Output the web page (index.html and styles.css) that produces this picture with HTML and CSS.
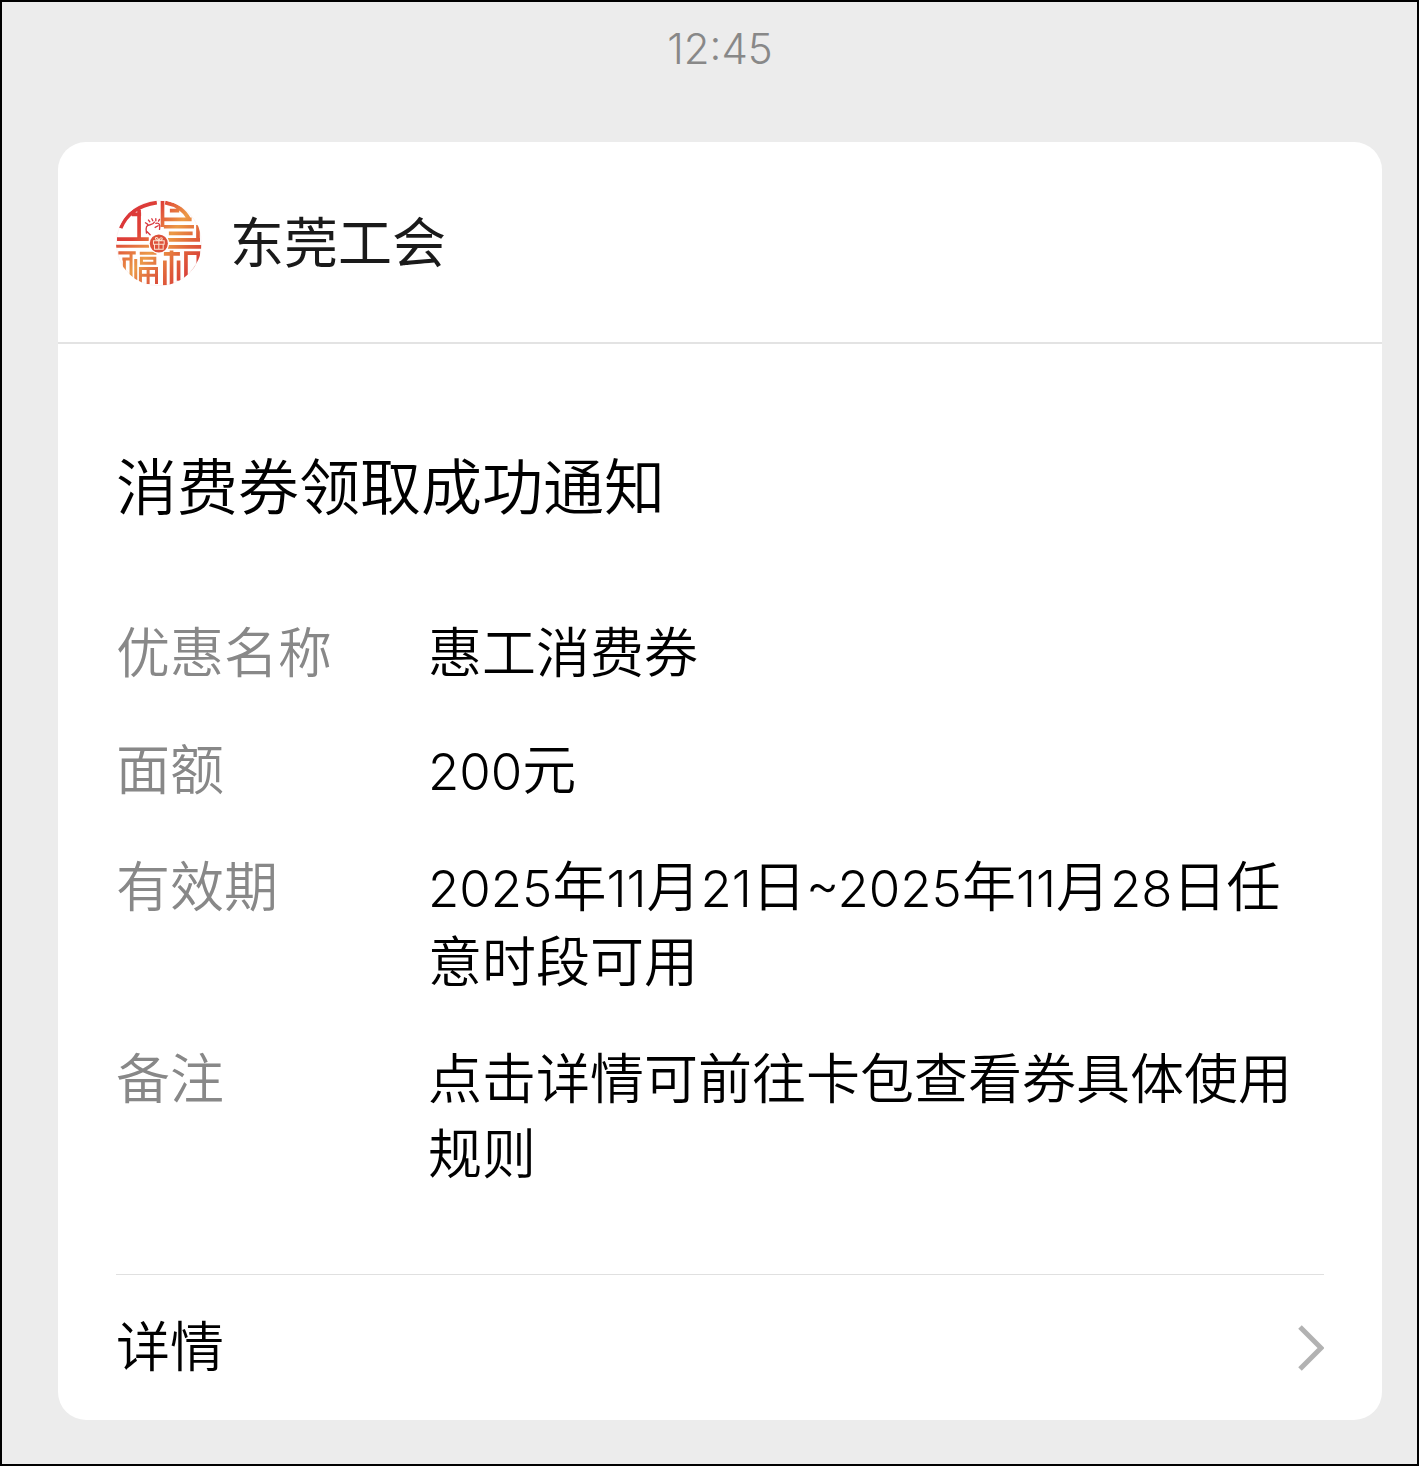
FILE: index.html
```html
<!DOCTYPE html>
<html lang="zh-CN">
<head>
<meta charset="utf-8">
<meta name="viewport" content="width=device-width, initial-scale=1">
<title>消费券领取成功通知</title>
<link rel="stylesheet" href="styles.css">
</head>
<body>
<main class="chat">
  <time class="time" datetime="12:45">12:45</time>
  <article class="card">
    <header class="card-header">
      <svg class="logo" viewBox="17 17 257 257" aria-hidden="true">
        <defs>
          <linearGradient id="tone" gradientUnits="userSpaceOnUse" x1="20" y1="40" x2="270" y2="240">
            <stop offset="0" stop-color="#d9303a"/>
            <stop offset=".3" stop-color="#df4238"/>
            <stop offset=".55" stop-color="#ec9a45"/>
            <stop offset=".75" stop-color="#e0603a"/>
            <stop offset="1" stop-color="#d52f39"/>
          </linearGradient>
          <linearGradient id="warm" gradientUnits="userSpaceOnUse" x1="20" y1="150" x2="150" y2="270">
            <stop offset="0" stop-color="#e0503a"/>
            <stop offset=".5" stop-color="#eb9a48"/>
            <stop offset="1" stop-color="#d94338"/>
          </linearGradient>
          <clipPath id="disc"><circle cx="145" cy="146" r="128"/></clipPath>
        </defs>
        <circle cx="145" cy="146" r="127" fill="none" stroke="#f4dcda" stroke-width="1"/>
        <g clip-path="url(#disc)" fill="none" stroke="url(#tone)" stroke-width="11">
          <path d="M31 101Q57 37 139 25M64 60H92M86 46V134M20 134H115"/>
          <path d="M156 20V98M164 25Q214 34 236 75M160 75H243M178 49H206M160 97H250M262 92V136M175 117H246M172 136H268"/>
          <path d="M172 157H272M160 178H208M183 168V272M163 198V272M204 198V258M226 260V176H263V210L234 250"/>
        </g>
        <g clip-path="url(#disc)" fill="none" stroke="url(#warm)" stroke-width="9">
          <path d="M17 155H116M24 175H76M36 193H58M62 175V250M42 193V240M76 193V256M88 176H138M93 191H133V206H93ZM90 268V222H138V268M90 242H138M113 222V268"/>
        </g>
        <g fill="none" stroke="#d93940" stroke-width="4" stroke-linecap="round">
          <path d="M108 116Q103 91 119 91Q129 90 132 83M111 89L105 85M118 82L114 77M127 79L124 73M136 79L136 73M144 80L147 75M136 87Q146 84 148 94L147 105M143 94L134 99M119 121L110 112"/>
        </g>
        <circle cx="145" cy="147" r="31" fill="#fff"/>
        <circle cx="145" cy="147" r="27" fill="#dc513a"/>
        <path d="M129 139H161V149H129ZM132 149V164H158V149M145 139V164M145 138Q130 135 137 129Q142 128 145 138Q149 127 155 131Q157 137 145 138" fill="none" stroke="#fbe3cf" stroke-width="3"/>
      </svg>
      <span class="sender">东莞工会</span>
    </header>
    <section class="card-body">
      <h1 class="title">消费券领取成功通知</h1>
      <dl class="fields">
        <dt>优惠名称</dt><dd>惠工消费券</dd>
        <dt>面额</dt><dd><span class="num">200</span>元</dd>
        <dt>有效期</dt><dd><span class="num">2025</span>年<span class="num">11</span>月<span class="num">21</span>日<span class="num">~2025</span>年<span class="num">11</span>月<span class="num">28</span>日任<wbr>意时段可用</dd>
        <dt>备注</dt><dd>点击详情可前往卡包查看券具体使用规则</dd>
      </dl>
    </section>
    <a class="details" href="#">
      <span>详情</span>
      <svg class="chevron" viewBox="0 0 26 46" aria-hidden="true"><path d="M2 2L23 23L2 44" fill="none" stroke="#b2b2b2" stroke-width="5"/></svg>
    </a>
  </article>
</main>
</body>
</html>
```
FILE: styles.css
```css
* {
  box-sizing: border-box;
}

body {
  margin: 0;
  background: #ececec;
  color: #000;
  font-family: Inter, "Noto Sans CJK SC", sans-serif;
  font-size: 54px;
  font-weight: 350;
  line-height: 75px;
}

.chat {
  display: flex;
  flex-direction: column;
  min-height: 100vh;
  padding: 15px 35px 44px 56px;
  border: 2px solid #000;
}

.time {
  margin-bottom: 61px;
  color: #888;
  font-size: 42px;
  line-height: 64px;
  text-align: center;
}

.card {
  border-radius: 28px;
  background: #fff;
}

.card-header {
  display: flex;
  align-items: center;
  gap: 28px;
  height: 202px;
  padding: 2px 58px 0;
  border-bottom: 2px solid #e3e3e3;
}

.logo {
  flex: none;
  width: 86px;
  height: 86px;
}

.sender {
  color: #1a1a1a;
  font-weight: 400;
}

.card-body {
  padding: 107px 58px 82px;
}

.title {
  margin: 0 0 90px;
  font-size: 61px;
  font-weight: 350;
  line-height: 75px;
}

.fields {
  display: grid;
  grid-template-columns: 312px 1fr;
  row-gap: 42px;
  margin: 0;
}

.fields dt {
  color: #888;
}

.fields dd {
  margin: 0;
}

.num {
  font-size: 51px;
  line-height: 1;
}

.details {
  display: flex;
  align-items: center;
  justify-content: space-between;
  height: 146px;
  margin: 0 58px;
  border-top: 1px solid #e0e0e0;
  color: inherit;
  text-decoration: none;
}

.chevron {
  flex: none;
  width: 26px;
  height: 46px;
}
```
